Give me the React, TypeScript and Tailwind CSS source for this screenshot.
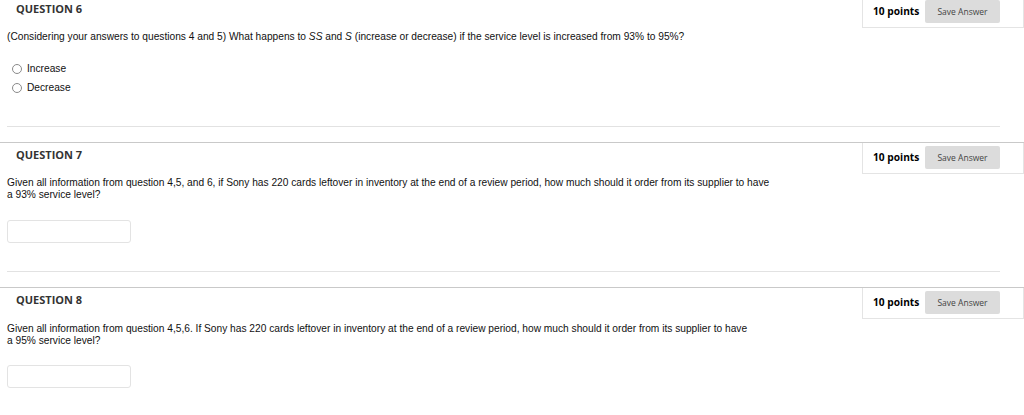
import { ReactNode } from "react";

type QuestionProps = {
  number: number;
  children: ReactNode;
  last?: boolean;
};

const Question = ({ number, children, last }: QuestionProps) => {
  return (
    <section>
      <div className="flex justify-between h-[32px] border-t border-[#c9c9c9]">
        <h3 className="pl-4 pt-[5px] text-[11px] leading-[14px] font-bold text-[#333] font-['Open_Sans',sans-serif]">
          QUESTION {number}
        </h3>
        <div className="w-[162px] h-[31px] flex items-start pt-[3px] border-l border-r border-b border-[#e4e4e4] font-['Open_Sans',sans-serif]">
          <span className="ml-[10px] mt-[4px] text-[10.2px] leading-[14px] font-bold text-black">10 points</span>
          <button className="ml-auto mr-[23px] w-[75px] h-[23px] rounded-[2px] bg-[#dcdcdc] text-[8.5px] text-[#444]">
            Save Answer
          </button>
        </div>
      </div>
      {children}
      {!last && <div className="ml-[7px] w-[993px] border-t border-[#e2e2e2]" />}
      {!last && <div className="h-[15px]" />}
    </section>
  );
};

const Radio = ({ label }: { label: string }) => (
  <label className="flex items-center h-[19px] pl-[12px]">
    <span className="w-[10px] h-[10px] rounded-full border border-[#8a8a8a] bg-white" />
    <span className="ml-[5px]">{label}</span>
  </label>
);

const AnswerBox = () => (
  <input
    type="text"
    className="block ml-[7px] w-[124px] h-[23px] rounded-[3px] border border-[#e3e3e3] outline-none"
  />
);

export default function App() {
  return (
    <div className="w-[1024px] h-[415px] overflow-hidden bg-white text-[#111] text-[10.2px] leading-[12px] font-['Liberation_Sans',Arial,sans-serif]">
      <div className="-mt-[4px]">
        <Question number={6}>
          <p className="mt-[3px] pl-[7px]">
            (Considering your answers to questions 4 and 5) What happens to <i>SS</i> and <i>S</i> (increase or
            decrease) if the service level is increased from 93% to 95%?
          </p>
          <div className="mt-[16px]">
            <Radio label="Increase" />
            <Radio label="Decrease" />
          </div>
          <div className="h-[29px]" />
        </Question>
        <Question number={7}>
          <p className="mt-[3px] pl-[7px]">
            Given all information from question 4,5, and 6, if Sony has 220 cards leftover in inventory at the end of a
            review period, how much should it order from its supplier to have
            <br />a 93% service level?
          </p>
          <div className="mt-[19px]">
            <AnswerBox />
          </div>
          <div className="h-[28px]" />
        </Question>
        <Question number={8} last>
          <p className="mt-[4px] pl-[7px]">
            Given all information from question 4,5,6. If Sony has 220 cards leftover in inventory at the end of a review
            period, how much should it order from its supplier to have
            <br />a 95% service level?
          </p>
          <div className="mt-[18px]">
            <AnswerBox />
          </div>
        </Question>
      </div>
    </div>
  );
}
